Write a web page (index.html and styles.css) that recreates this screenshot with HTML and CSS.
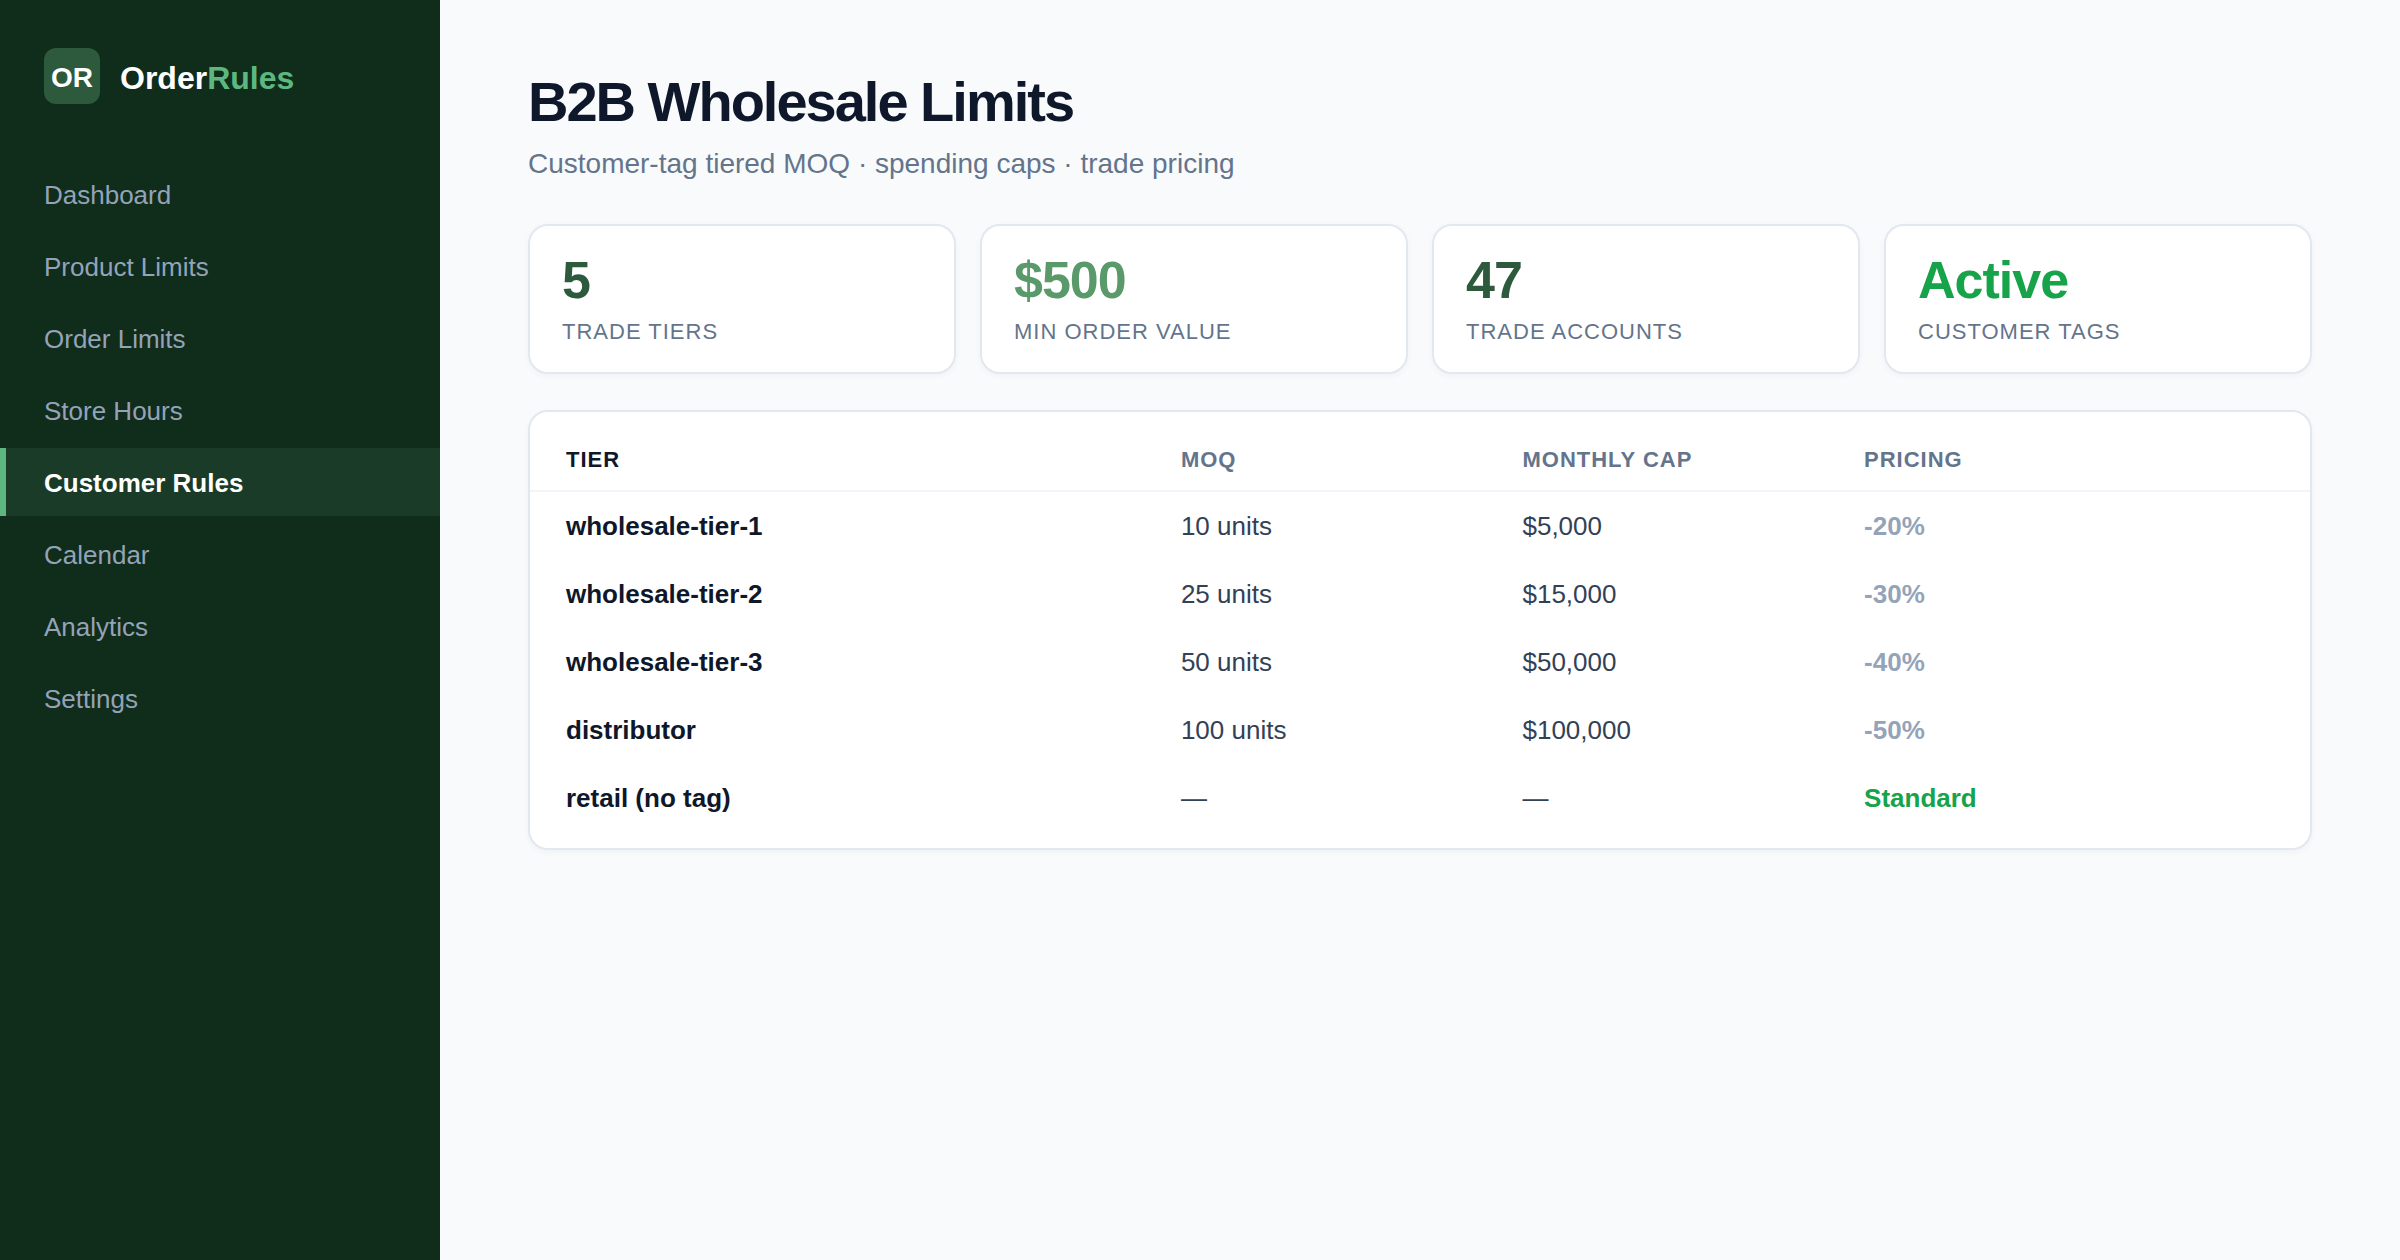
FILE: index.html
```
<!DOCTYPE html>
<html lang="en">
<head>
  <meta charset="UTF-8">
  <meta name="viewport" content="width=device-width, initial-scale=1">
  <title>OrderRules - B2B Wholesale Limits</title>
  <link rel="stylesheet" href="styles.css">
</head>
<body>
  <div class="app">
    <aside class="sidebar">
      <div class="brand">
        <div class="logo">OR</div>
        <div class="brand-name">Order<span>Rules</span></div>
      </div>
      <nav class="nav">
        <a href="#">Dashboard</a>
        <a href="#">Product Limits</a>
        <a href="#">Order Limits</a>
        <a href="#">Store Hours</a>
        <a href="#" class="active" aria-current="page">Customer Rules</a>
        <a href="#">Calendar</a>
        <a href="#">Analytics</a>
        <a href="#">Settings</a>
      </nav>
    </aside>

    <main class="main">
      <h1>B2B Wholesale Limits</h1>
      <p class="sub">Customer-tag tiered MOQ · spending caps · trade pricing</p>

      <div class="stats">
        <div class="stat">
          <div class="value">5</div>
          <div class="label">Trade Tiers</div>
        </div>
        <div class="stat">
          <div class="value light">$500</div>
          <div class="label">Min Order Value</div>
        </div>
        <div class="stat">
          <div class="value">47</div>
          <div class="label">Trade Accounts</div>
        </div>
        <div class="stat">
          <div class="value ok">Active</div>
          <div class="label">Customer Tags</div>
        </div>
      </div>

      <div class="panel">
        <table>
          <thead>
            <tr><th>Tier</th><th>MOQ</th><th>Monthly Cap</th><th>Pricing</th></tr>
          </thead>
          <tbody>
            <tr><td class="tier">wholesale-tier-1</td><td>10 units</td><td>$5,000</td><td class="price">-20%</td></tr>
            <tr><td class="tier">wholesale-tier-2</td><td>25 units</td><td>$15,000</td><td class="price">-30%</td></tr>
            <tr><td class="tier">wholesale-tier-3</td><td>50 units</td><td>$50,000</td><td class="price">-40%</td></tr>
            <tr><td class="tier">distributor</td><td>100 units</td><td>$100,000</td><td class="price">-50%</td></tr>
            <tr><td class="tier">retail (no tag)</td><td>—</td><td>—</td><td class="price ok">Standard</td></tr>
          </tbody>
        </table>
      </div>
    </main>
  </div>
</body>
</html>
```

FILE: styles.css
```
* {
  box-sizing: border-box;
}
body {
  margin: 0;
  font-family: "Helvetica Neue", "Liberation Sans", Arial, sans-serif;
  background: #f8fafc;
  color: #0f172a;
}
.app {
  display: flex;
  min-height: 100vh;
}

/* sidebar */
.sidebar {
  flex: 0 0 440px;
  padding: 48px 0;
  background: #102c1b;
}
.brand {
  display: flex;
  align-items: center;
  gap: 20px;
  padding: 0 44px;
  margin-bottom: 56px;
}
.logo {
  display: flex;
  align-items: center;
  justify-content: center;
  width: 56px;
  height: 56px;
  padding-top: 4px;
  border-radius: 12px;
  background: #2d5a3d;
  color: #fff;
  font-size: 28px;
  font-weight: bold;
}
.brand-name {
  padding-top: 4px;
  color: #fff;
  font-size: 32px;
  line-height: 40px;
  font-weight: bold;
}
.brand-name span {
  color: #5cb87f;
}
.nav {
  display: flex;
  flex-direction: column;
  gap: 4px;
}
.nav a {
  padding: 2px 44px 0 38px;
  border-left: 6px solid transparent;
  color: #94a3b8;
  font-size: 26px;
  line-height: 66px;
  text-decoration: none;
}
.nav a.active {
  border-left-color: #5cb87f;
  background: #1a3b27;
  color: #fff;
  font-weight: bold;
}

/* main */
.main {
  flex: 1;
  min-width: 0;
  padding: 68px 88px;
}
h1 {
  margin: 0;
  font-size: 56px;
  line-height: 68px;
  letter-spacing: -2px;
}
.sub {
  margin: 8px 0 40px;
  color: #64748b;
  font-size: 28px;
  line-height: 40px;
}
.stats {
  display: grid;
  grid-template-columns: repeat(4, 1fr);
  gap: 24px;
  margin-bottom: 36px;
}
.stat,
.panel {
  background: #fff;
  border: 2px solid #e2e8f0;
  border-radius: 20px;
  box-shadow: 0 2px 6px rgba(15, 23, 42, 0.04);
}
.stat {
  padding: 26px 32px;
}
.value {
  color: #2d5a3d;
  font-size: 52px;
  line-height: 56px;
  font-weight: bold;
  letter-spacing: -1px;
}
.value.light {
  color: #5a9a6a;
}
.label {
  margin-top: 10px;
  color: #64748b;
  font-size: 22px;
  line-height: 28px;
  letter-spacing: 1px;
  text-transform: uppercase;
}

/* tier table */
.panel {
  padding: 16px 0;
}
table,
thead,
tbody {
  display: block;
}
tr {
  display: grid;
  grid-template-columns: 36% 20% 20% 24%;
  padding: 0 36px;
}
thead tr {
  border-bottom: 2px solid #f1f5f9;
}
th {
  padding: 2px 0 0;
  color: #64748b;
  font-size: 22px;
  line-height: 60px;
  letter-spacing: 1px;
  text-align: left;
  text-transform: uppercase;
}
th:first-child {
  color: #0f172a;
}
td {
  padding: 0;
  color: #334155;
  font-size: 26px;
  line-height: 68px;
}
.tier {
  color: #0f172a;
  font-weight: bold;
}
.price {
  color: #94a3b8;
  font-weight: bold;
}
.value.ok,
.price.ok {
  color: #16a34a;
}
```
